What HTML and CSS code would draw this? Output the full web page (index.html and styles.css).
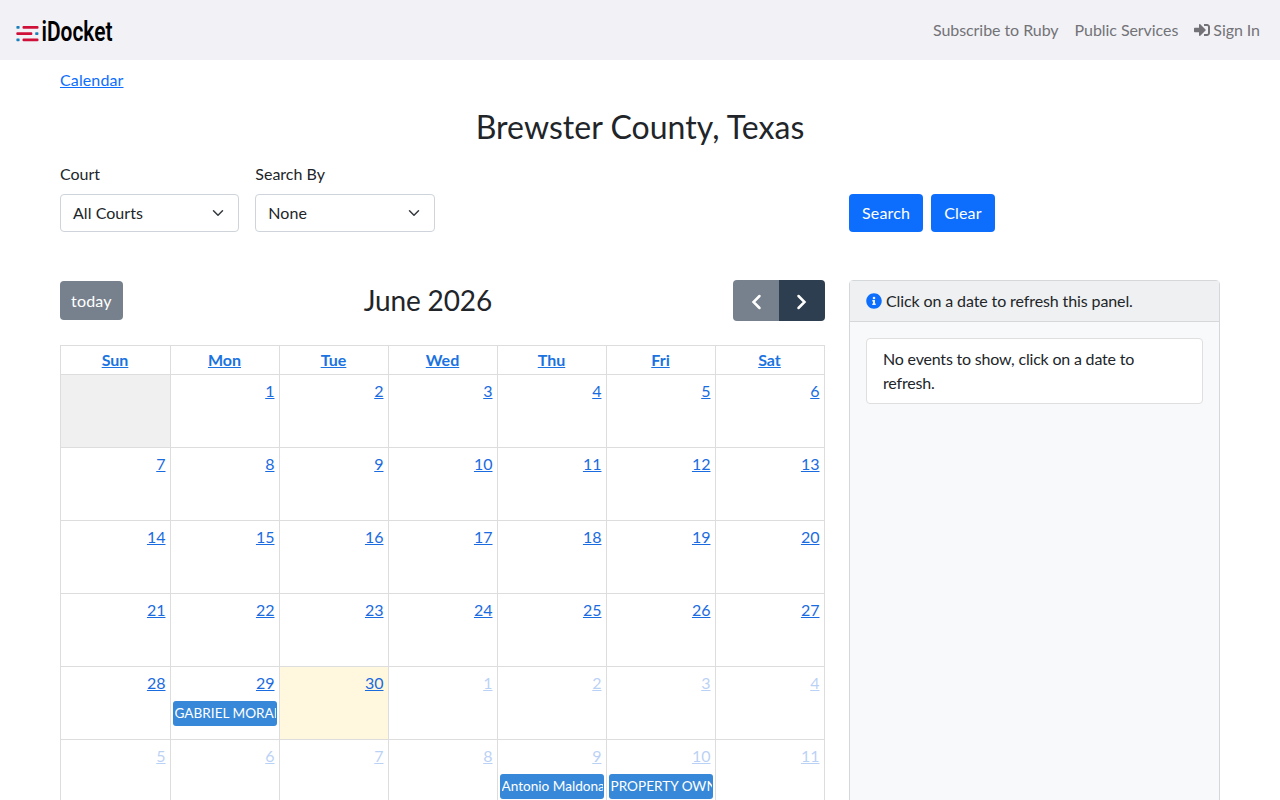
FILE: index.html
```html
<!DOCTYPE html>
<html lang="en">
<head>
    <meta charset="UTF-8">
    <meta name="viewport" content="width=device-width, initial-scale=1.0">
    <title>iDocket - Brewster County, Texas</title>
    <link rel="stylesheet" href="styles.css">
</head>
<body>

    <nav class="navbar">
        <a class="navbar-brand" href="#">
            <svg width="98" height="28" viewBox="0 0 98 28">
                <g fill="#cf1038">
                    <rect x="6.5" y="10" width="16" height="2.8" rx="1"/>
                    <rect x="0.3" y="16.2" width="16" height="2.8" rx="1"/>
                    <rect x="6.5" y="22.4" width="16" height="2.8" rx="1"/>
                </g>
                <g fill="#1c80ba">
                    <rect x="0.4" y="10" width="3.2" height="2.800" rx="0.7"/>
                    <rect x="19.200" y="16.2" width="3.2" height="2.800" rx="0.7"/>
                    <rect x="0.4" y="22.4" width="3.2" height="2.800" rx="0.7"/>
                </g>
                <text class="logo-text" x="25.5" y="25.1" textLength="71" lengthAdjust="spacingAndGlyphs">iDocket</text>
            </svg>
        </a>
        <div class="navbar-nav">
            <a href="#">Subscribe to Ruby</a>
            <a href="#">Public Services</a>
            <a href="#"><svg class="icon" viewBox="0 0 512 512"><path fill="currentColor" d="M416 448h-84c-6.600 0-12-5.400-12-12v-40c0-6.600 5.400-12 12-12h84c17.700 0 32-14.300 32-32V160c0-17.700-14.300-32-32-32h-84c-6.600 0-12-5.400-12-12V76c0-6.600 5.400-12 12-12h84c53 0 96 43 96 96v192c0 53-43 96-96 96zm-47-209L201 71c-15-15-41-4.500-41 17v96H24c-13.300 0-24 10.700-24 24v96c0 13.300 10.700 24 24 24h136v96c0 21.500 26 32 41 17l168-168c9.300-9.400 9.300-24.600 0-34z"/></svg> Sign In</a>
        </div>
    </nav>

    <main class="container">
        <a class="breadcrumb" href="#">Calendar</a>
        <h1>Brewster County, Texas</h1>

        <form class="search-form">
            <div class="field">
                <label>Court</label>
                <div class="select">All Courts
                    <svg viewBox="0 0 16 16"><path fill="none" stroke="#343a40" stroke-linecap="round" stroke-linejoin="round" stroke-width="2" d="m2 5 6 6 6-6"/></svg>
                </div>
            </div>
            <div class="field">
                <label>Search By</label>
                <div class="select">None
                    <svg viewBox="0 0 16 16"><path fill="none" stroke="#343a40" stroke-linecap="round" stroke-linejoin="round" stroke-width="2" d="m2 5 6 6 6-6"/></svg>
                </div>
            </div>
            <div class="form-buttons">
                <button type="button" class="btn">Search</button>
                <button type="button" class="btn">Clear</button>
            </div>
        </form>

        <div class="content">
            <section class="calendar">
                <div class="toolbar">
                    <button class="cal-btn today-btn">today</button>
                    <h2>June 2026</h2>
                    <div class="btn-group">
                        <button class="cal-btn prev"><svg viewBox="0 0 24 24"><path d="M15.500 6 9.500 12l6 6"/></svg></button>
                        <button class="cal-btn next"><svg viewBox="0 0 24 24"><path d="M8.500 6l6 6-6 6"/></svg></button>
                    </div>
                </div>
                <div class="grid" id="calendarGrid"></div>
            </section>

            <aside class="panel">
                <div class="panel-header">
                    <svg class="icon info" viewBox="0 0 512 512"><path fill="currentColor" d="M256 8C119 8 8 119 8 256s111 248 248 248 248-111 248-248S393 8 256 8zm0 110a42 42 0 1 1 0 84 42 42 0 0 1 0-84zm56 254c0 6.600-5.400 12-12 12h-88c-6.600 0-12-5.400-12-12v-24c0-6.600 5.400-12 12-12h12v-64h-12c-6.600 0-12-5.400-12-12v-24c0-6.600 5.400-12 12-12h64c6.600 0 12 5.400 12 12v100h12c6.600 0 12 5.400 12 12v24z"/></svg>
                    Click on a date to refresh this panel.
                </div>
                <div class="panel-body">
                    <div class="event-card">No events to show, click on a date to refresh.</div>
                </div>
            </aside>
        </div>
    </main>

    <script>
        const grid = document.getElementById('calendarGrid');
        const days = ['Sun', 'Mon', 'Tue', 'Wed', 'Thu', 'Fri', 'Sat'];

        // Events by cell position (0 = Sunday of the first week)
        const events = {
            29: 'GABRIEL MORAL',
            39: 'Antonio Maldona',
            40: 'PROPERTY OWN'
        };

        days.forEach(d => {
            grid.innerHTML += `<div class="day-name"><a href="#">${d}</a></div>`;
        });

        for (let i = 0; i < 42; i++) {
            if (i === 0) {
                grid.innerHTML += '<div class="day disabled"></div>';
                continue;
            }
            const other = i > 30;
            const num = other ? i - 30 : i;
            const cls = 'day' + (other ? ' other' : '') + (i === 30 ? ' today' : '');
            const ev = events[i] ? `<div class="event"><span>${events[i]}</span></div>` : '';
            grid.innerHTML += `<div class="${cls}"><a href="#" class="day-number">${num}</a>${ev}</div>`;
        }
    </script>
</body>
</html>
```
FILE: styles.css
```css
:root {
    --blue: #0d6efd;
    --text: #212529;
    --cal-border: #dddddd;
    --cal-btn: #2c3e50;
}

* {
    margin: 0;
    padding: 0;
    box-sizing: border-box;
}

body {
    height: 100vh;
    overflow: hidden;
    background-color: #fff;
    color: var(--text);
    font-family: Lato, "Liberation Sans", sans-serif;
    font-size: 16px;
    line-height: 1.5;
}

a {
    color: var(--blue);
}

button {
    font: inherit;
    border: 0;
    color: #fff;
}

/* Navbar */
.navbar {
    display: flex;
    justify-content: space-between;
    align-items: center;
    height: 60px;
    padding: 0 20px 0 16px;
    background-color: #f1f1f6;
}

.navbar-brand svg {
    display: block;
    overflow: visible;
}

.logo-text {
    font-family: Roboto, sans-serif;
    font-size: 28px;
    font-weight: 600;
    fill: #000;
}

.navbar-nav {
    display: flex;
    gap: 16px;
}

.navbar-nav a {
    color: #737377;
    text-decoration: none;
    letter-spacing: -0.06px;
}

.icon {
    width: 16px;
    height: 16px;
    vertical-align: -2px;
}

.navbar-nav .icon {
    margin-right: -1px;
}

/* Page */
.container {
    padding: 8px 60px 0;
}

.breadcrumb {
    display: block;
    width: max-content;
    letter-spacing: 0.12px;
}

h1 {
    margin-top: 15px;
    font-size: 32px;
    font-weight: 400;
    line-height: 40px;
    letter-spacing: 0.04px;
    text-align: center;
}

.search-form {
    display: flex;
    align-items: flex-end;
    gap: 16px;
    margin-top: 15px;
}

.field {
    width: 179.330px;
}

.field label {
    display: block;
    margin-bottom: 8px;
}

.select {
    display: flex;
    justify-content: space-between;
    align-items: center;
    height: 38px;
    padding: 0 12px;
    border: 1px solid #ced4da;
    border-radius: 4px;
    letter-spacing: 0.05px;
}

.select svg {
    width: 16px;
    height: 12px;
}

.form-buttons {
    display: flex;
    gap: 8px;
    width: 371px;
    margin-left: auto;
}

.btn {
    height: 38px;
    padding: 0 13px;
    border-radius: 4px;
    background-color: var(--blue);
    letter-spacing: 0.17px;
}

/* Calendar */
.content {
    display: flex;
    gap: 24px;
    margin-top: 48px;
}

.calendar {
    width: 765px;
}

.toolbar {
    display: flex;
    justify-content: space-between;
    align-items: center;
    height: 41px;
    margin-bottom: 24px;
}

.toolbar h2 {
    font-size: 28px;
    font-weight: 400;
    line-height: 1.2;
    letter-spacing: -0.15px;
}

.cal-btn {
    background-color: var(--cal-btn);
}

.today-btn {
    height: 39px;
    padding: 0 11px;
    border-radius: 4px;
    background-color: #76818d;
    letter-spacing: 0.2px;
}

.btn-group {
    display: flex;
    border-radius: 4px;
    overflow: hidden;
}

.btn-group .cal-btn {
    width: 46px;
    height: 41px;
}

.btn-group .prev {
    background-color: #76818d;
}

.btn-group svg {
    display: block;
    width: 24px;
    height: 24px;
    margin: 2px auto 0;
    fill: none;
    stroke: #fff;
    stroke-width: 2.500;
    stroke-linecap: round;
}

.grid {
    display: grid;
    grid-template-columns: 110px repeat(6, 109px);
    grid-template-rows: 29px repeat(6, 73px);
    border-top: 1px solid var(--cal-border);
    border-left: 1px solid var(--cal-border);
}

.day-name,
.day {
    min-width: 0;
    border-right: 1px solid var(--cal-border);
    border-bottom: 1px solid var(--cal-border);
}

.day-name {
    padding: 2px 1px 0 0;
    font-weight: 700;
    text-align: center;
}

.day-name a {
    color: #1a73e0;
}

.day-number {
    display: block;
    padding: 4px 4.500px 0;
    text-align: right;
    color: #1a6be0;
}

.disabled {
    background-color: #f0f0f0;
}

.today {
    background-color: #fff8df;
}

.other .day-number {
    opacity: 0.3;
}

.event {
    height: 25px;
    margin: 6px 2px 0;
    padding: 0 1px 0 1.500px;
    border-radius: 3px;
    background-color: #3788d8;
    color: #fff;
    font-size: 13.600px;
    line-height: 25px;
}

.event span {
    display: block;
    overflow: hidden;
    white-space: nowrap;
}

/* Side panel */
.panel {
    width: 371px;
    min-height: 560px;
    border: 1px solid #d5d8db;
    border-radius: 4px;
    background-color: #f8f9fa;
}

.panel-header {
    height: 41px;
    padding: 8px 16px;
    border-bottom: 1px solid #d5d8db;
    background-color: #eff0f1;
    letter-spacing: -0.11px;
}

.info {
    color: var(--blue);
}

.panel-body {
    padding: 16px;
}

.event-card {
    padding: 8px 16px;
    border: 1px solid #dfdfdf;
    border-radius: 4px;
    background-color: #fff;
    letter-spacing: -0.19px;
}
```
